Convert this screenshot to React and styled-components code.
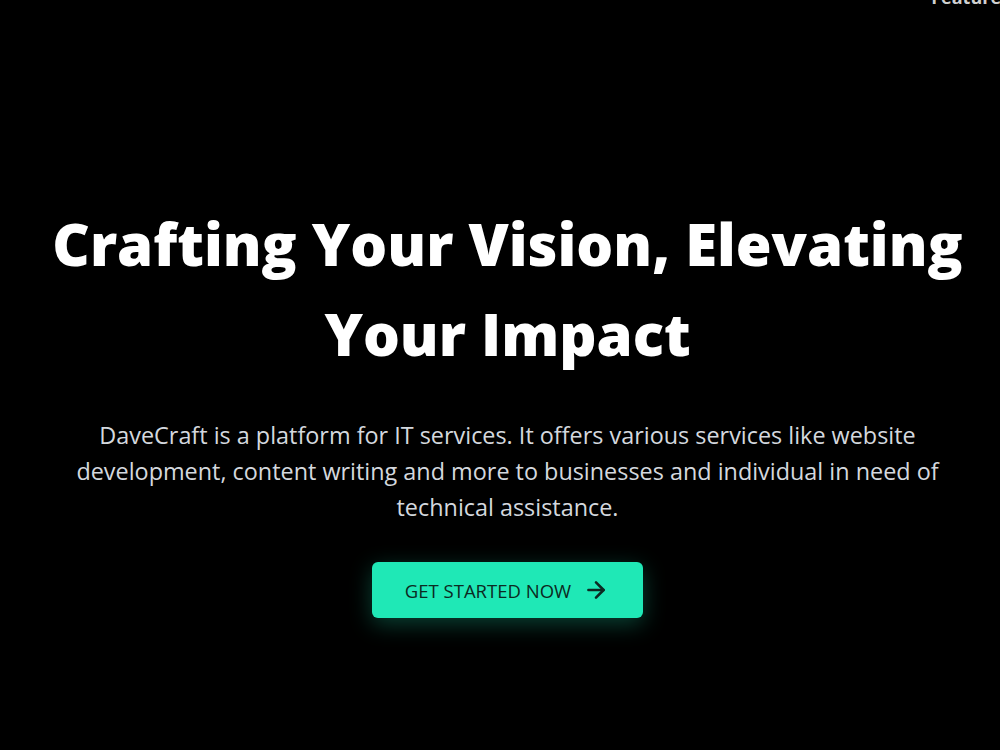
import React from 'react';
import styled, { createGlobalStyle } from 'styled-components';
import { ArrowRight } from 'lucide-react';

const GlobalStyle = createGlobalStyle`
  html, body {
    margin: 0;
    padding: 0;
    background: #000000;
  }
  body {
    font-family: "Open Sans", "Noto Sans", sans-serif;
  }
`;

const Page = () => {
  return (
    <>
      <GlobalStyle />
      <Wrapper>
        <TopBar>
          <NavLink>Features</NavLink>
        </TopBar>
        <Hero>
          <Title>
            Crafting Your Vision, Elevating
            <br />
            Your Impact
          </Title>
          <Lead>
            DaveCraft is a platform for IT services. It offers various services like website
            development, content writing and more to businesses and individual in need of
            technical assistance.
          </Lead>
          <CtaButton>
            GET STARTED NOW
            <ArrowRight size={26} strokeWidth={2.4} />
          </CtaButton>
        </Hero>
      </Wrapper>
    </>
  );
};

const Wrapper = styled.div`
  min-height: 750px;
  background: #000000;
  overflow: hidden;
`;

const TopBar = styled.div`
  display: flex;
  justify-content: flex-end;
  height: 8px;
  margin-top: -14px;
  margin-right: -10px;
`;

const NavLink = styled.span`
  font-size: 18px;
  font-weight: 700;
  color: #cfcfcf;
  line-height: 22px;
`;

const Hero = styled.section`
  display: flex;
  flex-direction: column;
  align-items: center;
  padding: 205px 0 0 15px;
  text-align: center;
`;

const Title = styled.h1`
  margin: 0;
  font-size: 58px;
  font-weight: 800;
  line-height: 90px;
  color: #ffffff;
  white-space: nowrap;
`;

const Lead = styled.p`
  margin: 38px 0 0;
  max-width: 900px;
  font-size: 23.4px;
  line-height: 36px;
  color: #d4d8de;
`;

const CtaButton = styled.button`
  display: flex;
  align-items: center;
  gap: 12px;
  margin-top: 37px;
  height: 56px;
  padding: 0 34px 0 33px;
  border: none;
  border-radius: 6px;
  background: #1fe8b6;
  color: #0c2a22;
  font-family: "Open Sans", "Noto Sans", sans-serif;
  font-size: 18.5px;
  font-weight: 400;
  cursor: pointer;
  box-shadow: 0 6px 22px rgba(31, 232, 182, 0.28);
`;

export default Page;
